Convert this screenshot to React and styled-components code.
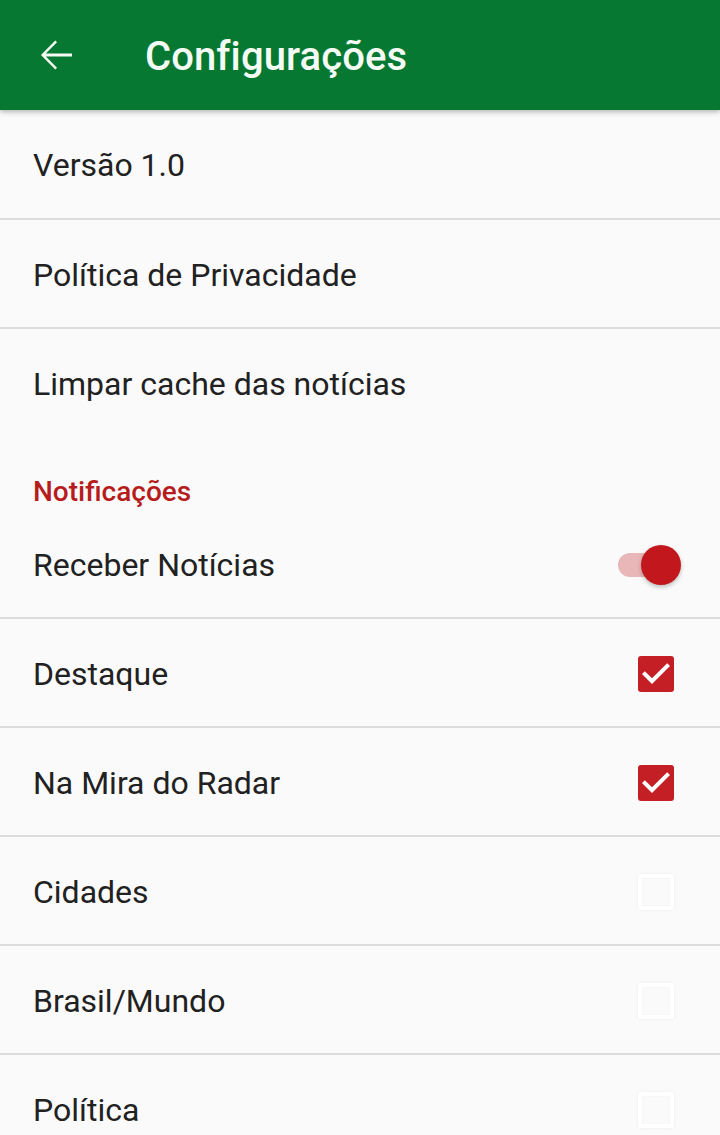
import React from 'react';
import styled, { createGlobalStyle } from 'styled-components';

const GlobalStyle = createGlobalStyle`
  html, body {
    margin: 0;
    padding: 0;
    background: #fafafa;
  }
  body {
    font-family: Roboto, "Noto Sans", Arial, sans-serif;
    color: #212121;
  }
`;

const Page = styled.div`
  width: 720px;
  min-height: 1135px;
  background: #fafafa;
  overflow: hidden;
`;

const Toolbar = styled.header`
  position: relative;
  z-index: 2;
  height: 110px;
  display: flex;
  align-items: center;
  background: #077831;
  box-shadow: 0 2px 5px rgba(0, 0, 0, 0.28);
  h1 {
    margin: 0;
    padding-top: 3px;
    font-size: 40px;
    font-weight: 500;
    color: #f4fbf4;
    letter-spacing: 0.1px;
  }
`;

const BackButton = styled.button`
  width: 112px;
  height: 110px;
  margin-right: 33px;
  padding: 0 0 0 32px;
  border: 0;
  background: none;
  display: flex;
  align-items: center;
  svg {
    display: block;
  }
`;

const List = styled.div`
  display: flex;
  flex-direction: column;
`;

const Row = styled.div`
  height: ${p => (p.$first ? 108 : 107)}px;
  box-sizing: border-box;
  display: flex;
  align-items: center;
  justify-content: space-between;
  padding: 2px 46px 0 33px;
  border-bottom: ${p => (p.$last ? 'none' : '2px solid #dcdcdc')};
  font-size: 32px;
  color: #212121;
  ${p => !p.$last && 'height: ' + (p.$first ? 110 : 109) + 'px;'}
`;

const Category = styled.div`
  height: 74px;
  display: flex;
  align-items: center;
  padding: 0 33px;
  padding-top: 36px;
  box-sizing: border-box;
  font-size: 28px;
  font-weight: 500;
  color: #b71c1c;
`;

const Switch = styled.div`
  position: relative;
  width: 64px;
  height: 40px;
  margin-right: -7px;
  &::before {
    content: '';
    position: absolute;
    left: 1px;
    top: 8px;
    width: 52px;
    height: 24px;
    border-radius: 12px;
    background: #eab7b9;
  }
  &::after {
    content: '';
    position: absolute;
    right: 0;
    top: 0;
    width: 40px;
    height: 40px;
    border-radius: 50%;
    background: #c2181d;
    box-shadow: 0 2px 4px rgba(0, 0, 0, 0.25);
  }
`;

const Box = styled.div`
  width: 36px;
  height: 36px;
  box-sizing: border-box;
  border-radius: 3px;
  display: flex;
  align-items: center;
  justify-content: center;
  background: ${p => (p.$checked ? '#c41f25' : 'transparent')};
  border: ${p => (p.$checked ? 'none' : '4px solid #ffffff')};
  box-shadow: ${p =>
    p.$checked ? 'none' : '0 0 3px rgba(0,0,0,0.07), inset 0 0 2px rgba(0,0,0,0.05)'};
  svg {
    display: block;
  }
`;

const Check = () => (
  <svg width="36" height="36" viewBox="3 3 18 18">
    <path d="M10 17l-5-5 1.41-1.41L10 14.17l7.59-7.59L19 8l-9 9z" fill="#fff" />
  </svg>
);

const topics = [
  { label: 'Destaque', checked: true },
  { label: 'Na Mira do Radar', checked: true },
  { label: 'Cidades', checked: false },
  { label: 'Brasil/Mundo', checked: false },
  { label: 'Política', checked: false }
];

const App = () => {
  return (
    <Page>
      <GlobalStyle />
      <Toolbar>
        <BackButton aria-label="Voltar">
          <svg width="48" height="48" viewBox="0 0 24 24">
            <path
              d="M20 11.25H6.9l5.6-5.6-.85-.85L4.6 11.85v.3l7.05 7.05.85-.85-5.6-5.6H20z"
              fill="#f4fbf4"
            />
          </svg>
        </BackButton>
        <h1>Configurações</h1>
      </Toolbar>
      <List>
        <Row $first>Versão 1.0</Row>
        <Row>Política de Privacidade</Row>
        <Row $last>Limpar cache das notícias</Row>
        <Category>Notificações</Category>
        <Row>
          Receber Notícias
          <Switch />
        </Row>
        {topics.map(t => (
          <Row key={t.label}>
            {t.label}
            <Box $checked={t.checked}>{t.checked && <Check />}</Box>
          </Row>
        ))}
      </List>
    </Page>
  );
};

export default App;
